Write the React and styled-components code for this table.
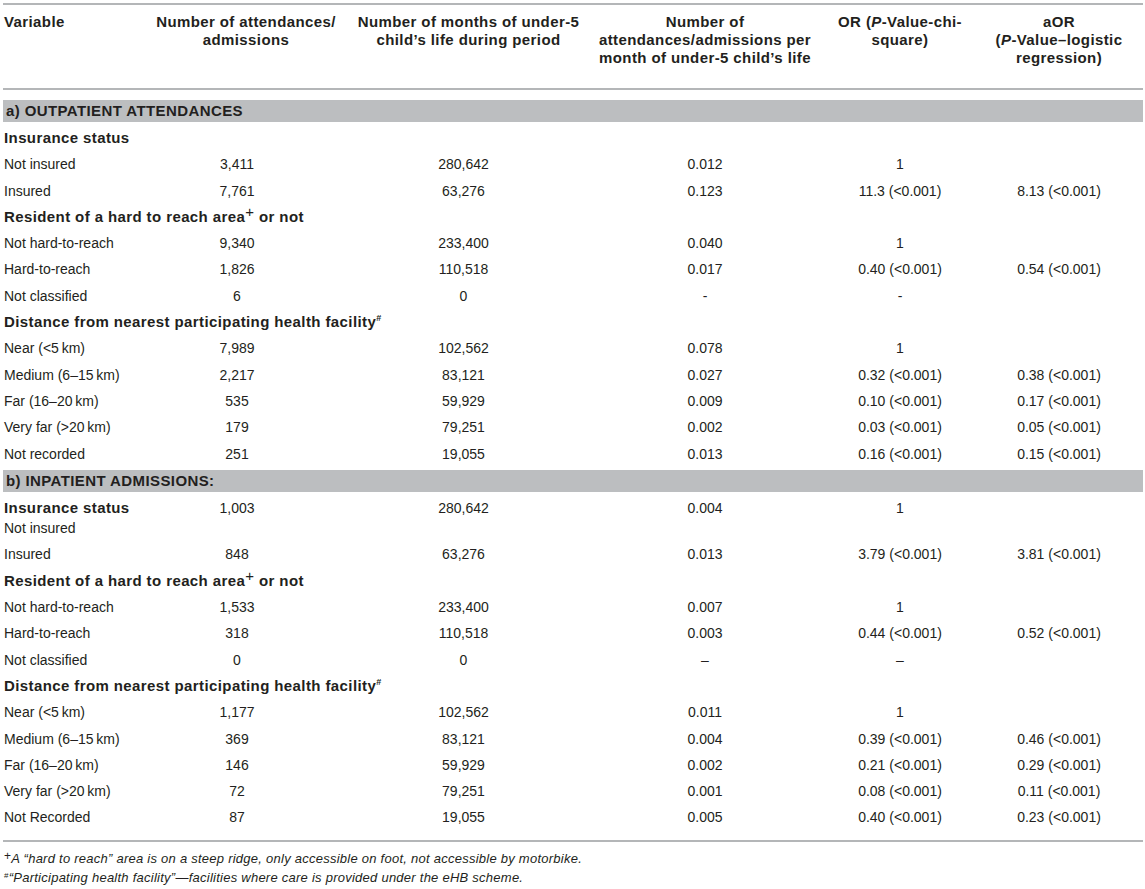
import React from 'react'
import styled, { createGlobalStyle, css } from 'styled-components'

const GlobalStyle = createGlobalStyle`
    body {
        margin: 0;
        background: #ffffff;
        color: #231f20;
        font-family: "Liberation Sans", Arial, sans-serif;
    }
`

// Helvetica Neue bold in the original is wider than Arial bold
const boldText = css`
    font-weight: 700;
    font-size: 15px;
    letter-spacing: 0.4px;
`

const Page = styled.div`
    width: 1140px;
    margin: 3px 2px 0 3px;
`

const Frame = styled.div`
    border-top: 2px solid #b4b6b8;
    border-bottom: 2px solid #b4b6b8;
    padding-bottom: 9px;
`

const Table = styled.table`
    width: 100%;
    border-collapse: collapse;
    table-layout: fixed;
    font-size: 14px;
`

const HeadCell = styled.th`
    ${boldText}
    padding: 8px 2px 21px;
    line-height: 18px;
    text-align: ${(p) => (p.$left ? 'left' : 'center')};
    padding-left: ${(p) => (p.$left ? '1px' : '2px')};
    vertical-align: top;
    white-space: nowrap;
    border-bottom: 2px solid #b4b6b8;
`

const SectionCell = styled.td`
    padding: ${(p) => (p.$first ? '10px' : '3px')} 0 3px;
`

const SectionBar = styled.div`
    ${boldText}
    height: 22px;
    line-height: 22px;
    background: #bcbec0;
    padding-left: 3px;
`

const GroupCell = styled.td`
    ${boldText}
    padding: 3px 1px;
    line-height: 20.3px;
    white-space: nowrap;
`

const LabelCell = styled.td`
    padding: 3px 1px;
    line-height: 20.3px;
    white-space: nowrap;
    vertical-align: top;
`

const ValueCell = styled.td`
    padding: 3px ${(p) => 2 + (p.$shift || 0)}px 3px 2px;
    line-height: 20.3px;
    text-align: center;
    white-space: nowrap;
    vertical-align: top;
`

const Strong = styled.span`
    ${boldText}
`

const Plus = styled.sup`
    font-size: 15px;
    line-height: 0;
    vertical-align: 5px;
    font-weight: 400;
`

const Hash = styled.sup`
    font-size: 9px;
    line-height: 0;
    vertical-align: 6px;
`

const Notes = styled.div`
    padding: 7px 0 0 1px;
    font-size: 13px;
    letter-spacing: 0.25px;
    line-height: 19px;
    font-style: italic;
`

const NoteMark = styled.sup`
    font-style: normal;
    font-size: ${(p) => (p.$small ? '8px' : '12px')};
    line-height: 0;
    vertical-align: ${(p) => (p.$small ? '4px' : '3px')};
`

const widths = [137, 212, 233, 240, 150, 168]
// data sits a little left of the header centre in the first two value columns
const dataShift = [18, 10, 0, 0, 0]

const headers = [
    ['Variable'],
    ['Number of attendances/', 'admissions'],
    ['Number of months of under-5', 'child\u2019s life during period'],
    ['Number of', 'attendances/admissions per', 'month of under-5 child\u2019s life'],
    [<>OR (<i>P</i>-Value-chi-</>, 'square)'],
    ['aOR', <>(<i>P</i>-Value–logistic</>, 'regression)'],
]

const resident = <>Resident of a hard to reach area<Plus>+</Plus> or not</>
const distance = <>Distance from nearest participating health facility<Hash>#</Hash></>

const sections = [
    {
        title: 'a) OUTPATIENT ATTENDANCES',
        groups: [
            {
                label: 'Insurance status',
                rows: [
                    ['Not insured', '3,411', '280,642', '0.012', '1', ''],
                    ['Insured', '7,761', '63,276', '0.123', '11.3 (<0.001)', '8.13 (<0.001)'],
                ],
            },
            {
                label: resident,
                rows: [
                    ['Not hard-to-reach', '9,340', '233,400', '0.040', '1', ''],
                    ['Hard-to-reach', '1,826', '110,518', '0.017', '0.40 (<0.001)', '0.54 (<0.001)'],
                    ['Not classified', '6', '0', '-', '-', ''],
                ],
            },
            {
                label: distance,
                rows: [
                    ['Near (<5\u2009km)', '7,989', '102,562', '0.078', '1', ''],
                    ['Medium (6–15\u2009km)', '2,217', '83,121', '0.027', '0.32 (<0.001)', '0.38 (<0.001)'],
                    ['Far (16–20\u2009km)', '535', '59,929', '0.009', '0.10 (<0.001)', '0.17 (<0.001)'],
                    ['Very far (>20\u2009km)', '179', '79,251', '0.002', '0.03 (<0.001)', '0.05 (<0.001)'],
                    ['Not recorded', '251', '19,055', '0.013', '0.16 (<0.001)', '0.15 (<0.001)'],
                ],
            },
        ],
    },
    {
        title: 'b) INPATIENT ADMISSIONS:',
        groups: [
            {
                label: 'Insurance status',
                merged: true,
                rows: [
                    ['Not insured', '1,003', '280,642', '0.004', '1', ''],
                    ['Insured', '848', '63,276', '0.013', '3.79 (<0.001)', '3.81 (<0.001)'],
                ],
            },
            {
                label: resident,
                rows: [
                    ['Not hard-to-reach', '1,533', '233,400', '0.007', '1', ''],
                    ['Hard-to-reach', '318', '110,518', '0.003', '0.44 (<0.001)', '0.52 (<0.001)'],
                    ['Not classified', '0', '0', '–', '–', ''],
                ],
            },
            {
                label: distance,
                rows: [
                    ['Near (<5\u2009km)', '1,177', '102,562', '0.011', '1', ''],
                    ['Medium (6–15\u2009km)', '369', '83,121', '0.004', '0.39 (<0.001)', '0.46 (<0.001)'],
                    ['Far (16–20\u2009km)', '146', '59,929', '0.002', '0.21 (<0.001)', '0.29 (<0.001)'],
                    ['Very far (>20\u2009km)', '72', '79,251', '0.001', '0.08 (<0.001)', '0.11 (<0.001)'],
                    ['Not Recorded', '87', '19,055', '0.005', '0.40 (<0.001)', '0.23 (<0.001)'],
                ],
            },
        ],
    },
]

const DataRow = ({ row, groupLabel }) => {
    const [label, ...values] = row
    return (
        <tr>
            <LabelCell>
                {groupLabel && <><Strong>{groupLabel}</Strong><br /></>}
                {label}
            </LabelCell>
            {values.map((v, i) => (
                <ValueCell key={i} $shift={dataShift[i]}>{v}</ValueCell>
            ))}
        </tr>
    )
}

const Group = ({ group }) => (
    <>
        {!group.merged && (
            <tr>
                <GroupCell colSpan={6}>{group.label}</GroupCell>
            </tr>
        )}
        {group.rows.map((row, i) => (
            <DataRow key={i} row={row} groupLabel={group.merged && i === 0 ? group.label : null} />
        ))}
    </>
)

export default function App() {
    return (
        <Page>
            <GlobalStyle />
            <Frame>
                <Table>
                    <colgroup>
                        {widths.map((w, i) => (
                            <col key={i} style={{ width: w }} />
                        ))}
                    </colgroup>
                    <thead>
                        <tr>
                            {headers.map((lines, i) => (
                                <HeadCell key={i} $left={i === 0}>
                                    {lines.map((line, j) => (
                                        <React.Fragment key={j}>
                                            {j > 0 && <br />}
                                            {line}
                                        </React.Fragment>
                                    ))}
                                </HeadCell>
                            ))}
                        </tr>
                    </thead>
                    {sections.map((section, si) => (
                        <tbody key={si}>
                            <tr>
                                <SectionCell colSpan={6} $first={si === 0}>
                                    <SectionBar>{section.title}</SectionBar>
                                </SectionCell>
                            </tr>
                            {section.groups.map((group, gi) => (
                                <Group key={gi} group={group} />
                            ))}
                        </tbody>
                    ))}
                </Table>
            </Frame>
            <Notes>
                <div><NoteMark>+</NoteMark>A “hard to reach” area is on a steep ridge, only accessible on foot, not accessible by motorbike.</div>
                <div><NoteMark $small>#</NoteMark>“Participating health facility”—facilities where care is provided under the eHB scheme.</div>
            </Notes>
        </Page>
    )
}
